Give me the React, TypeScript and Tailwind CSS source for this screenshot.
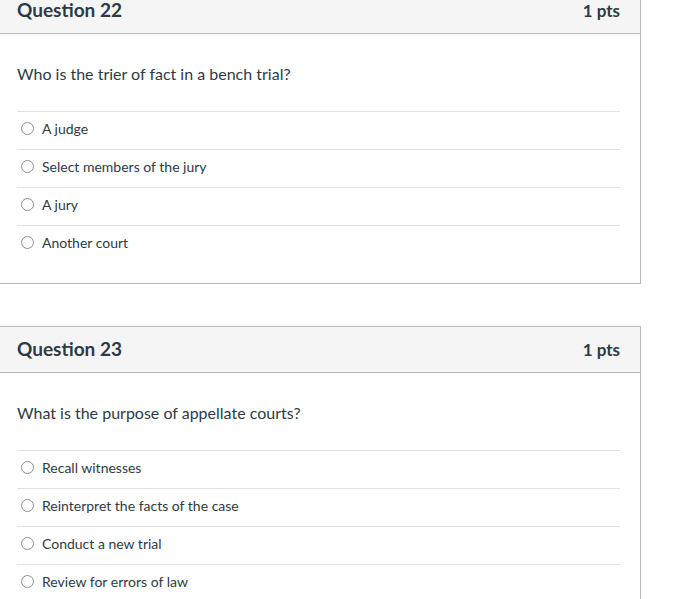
const questions = [
  {
    title: "Question 22",
    points: "1 pts",
    text: "Who is the trier of fact in a bench trial?",
    answers: ["A judge", "Select members of the jury", "A jury", "Another court"],
  },
  {
    title: "Question 23",
    points: "1 pts",
    text: "What is the purpose of appellate courts?",
    answers: ["Recall witnesses", "Reinterpret the facts of the case", "Conduct a new trial", "Review for errors of law"],
  },
];

function Radio() {
  return (
    <span className="inline-block h-[13px] w-[13px] shrink-0 rounded-full border border-[#8a8f94] bg-white" />
  );
}

function QuestionCard({ q, first }: { q: (typeof questions)[number]; first: boolean }) {
  return (
    <section
      className={`ml-[-1px] w-[642px] border border-[#b8bcbf] bg-white ${first ? "mt-[-13px]" : "mt-[42px]"}`}
    >
      <div className="flex h-[46px] items-center justify-between border-b border-[#b8bcbf] bg-[#f5f5f5] pl-[17px] pr-[20px]">
        <h2 className="text-[19px] font-bold text-[#2d3b45]">{q.title}</h2>
        <span className="text-[17px] font-bold text-[#2d3b45]">{q.points}</span>
      </div>
      <div className="pl-[17px] pr-[20px] pt-[28px] pb-[20px]">
        <p className="text-[16px] leading-[24px] text-[#2d3b45]">{q.text}</p>
        <div className="mt-[25px]">
          {q.answers.map((a) => (
            <div key={a} className="flex h-[38px] items-center gap-[8px] border-t border-[#dfe1e3] pb-[5px] pl-[4px]">
              <Radio />
              <span className="text-[14px] text-[#2d3b45]">{a}</span>
            </div>
          ))}
        </div>
      </div>
    </section>
  );
}

export default function App() {
  return (
    <main className="min-h-[599px] w-[683px] overflow-hidden bg-white font-['Lato',sans-serif]">
      {questions.map((q, i) => (
        <QuestionCard key={q.title} q={q} first={i === 0} />
      ))}
    </main>
  );
}
